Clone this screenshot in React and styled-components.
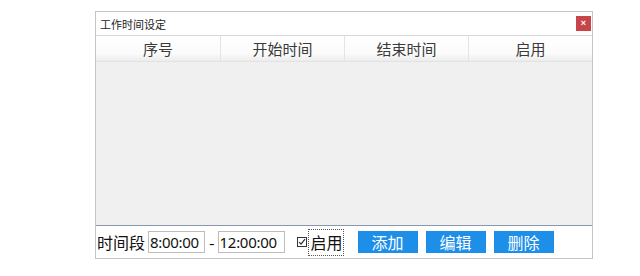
import React from 'react';
import styled, { createGlobalStyle } from 'styled-components';

const GlobalStyle = createGlobalStyle`
  html, body {
    margin: 0;
    padding: 0;
    background: #ffffff;
    font-family: "Microsoft YaHei", "Noto Sans CJK SC", "Liberation Sans", sans-serif;
  }
`;

const Page = styled.div`
  width: 640px;
  height: 276px;
  padding: 11px 0 0 95px;
  box-sizing: border-box;
`;

const Window = styled.div`
  width: 498px;
  height: 248px;
  box-sizing: border-box;
  border: 1px solid #c4c4c4;
  display: flex;
  flex-direction: column;
  background: #fff;
`;

const TitleBar = styled.div`
  height: 23px;
  display: flex;
  align-items: center;
  justify-content: space-between;
  padding: 0 1px 0 4px;
  border-bottom: 1px solid #d8d8d8;
`;

const Title = styled.span`
  font-size: 11px;
  color: #222;
`;

const CloseButton = styled.div`
  width: 15px;
  height: 15px;
  background: #c74448;
  color: #fff;
  font-size: 9px;
  line-height: 14px;
  text-align: center;
  font-family: "Liberation Sans", sans-serif;
  font-weight: bold;
`;

const HeaderRow = styled.div`
  display: grid;
  grid-template-columns: repeat(4, 1fr);
  height: 25px;
  background: linear-gradient(#ffffff 0%, #fbfbfb 70%, #ececec 100%);
  border-bottom: 1px solid #e2e2e2;
`;

const HeaderCell = styled.div`
  display: flex;
  align-items: center;
  justify-content: center;
  font-size: 15px;
  color: #3a3a3a;
  border-left: ${p => (p.$first ? 'none' : '1px solid #e4e4e4')};
`;

const Body = styled.div`
  flex: 1;
  background: #f0f0f0;
  border-bottom: 1px solid #8a98ad;
`;

const Footer = styled.div`
  height: 32px;
  display: flex;
  align-items: center;
  padding: 0 0 0 1px;
  font-size: 16px;
  color: #111;
`;

const Label = styled.span`
  margin-right: 3px;
`;

const TimeInput = styled.div`
  height: 22px;
  box-sizing: border-box;
  border: 1px solid #bdbdbd;
  padding: 0 1px;
  display: flex;
  align-items: center;
  font-family: "Noto Sans", "Liberation Sans", sans-serif;
  font-size: 15px;
  letter-spacing: -0.3px;
  width: ${p => p.$w}px;
`;

const Dash = styled.span`
  margin: 0 3px 0 4px;
`;

const CheckLabel = styled.div`
  display: flex;
  align-items: center;
  margin-left: 12px;
  gap: 1px;
`;

const Box = styled.span`
  width: 10px;
  height: 10px;
  box-sizing: border-box;
  border: 1px solid #333;
  display: flex;
  align-items: center;
  justify-content: center;
`;

const Focus = styled.span`
  border: 1px dotted #555;
  padding: 1px 0 1px 2px;
  line-height: 23px;
`;

const Button = styled.div`
  width: 60px;
  height: 22px;
  background: #1e8fe8;
  color: #fff;
  display: flex;
  align-items: center;
  justify-content: center;
  font-size: 16px;
  margin-left: ${p => p.$ml}px;
`;

export default function App() {
  return (
    <>
      <GlobalStyle />
      <Page>
        <Window>
          <TitleBar>
            <Title>工作时间设定</Title>
            <CloseButton>×</CloseButton>
          </TitleBar>
          <HeaderRow>
            <HeaderCell $first>序号</HeaderCell>
            <HeaderCell>开始时间</HeaderCell>
            <HeaderCell>结束时间</HeaderCell>
            <HeaderCell>启用</HeaderCell>
          </HeaderRow>
          <Body />
          <Footer>
            <Label>时间段</Label>
            <TimeInput $w={57}>8:00:00</TimeInput>
            <Dash>-</Dash>
            <TimeInput $w={67}>12:00:00</TimeInput>
            <CheckLabel>
              <Box>
                <svg width="8" height="8" viewBox="0 0 8 8">
                  <path d="M1 4 L3 6.2 L7 1.2" fill="none" stroke="#222" strokeWidth="1.1" />
                </svg>
              </Box>
              <Focus>启用</Focus>
            </CheckLabel>
            <Button $ml={14}>添加</Button>
            <Button $ml={8}>编辑</Button>
            <Button $ml={8}>删除</Button>
          </Footer>
        </Window>
      </Page>
    </>
  );
}
